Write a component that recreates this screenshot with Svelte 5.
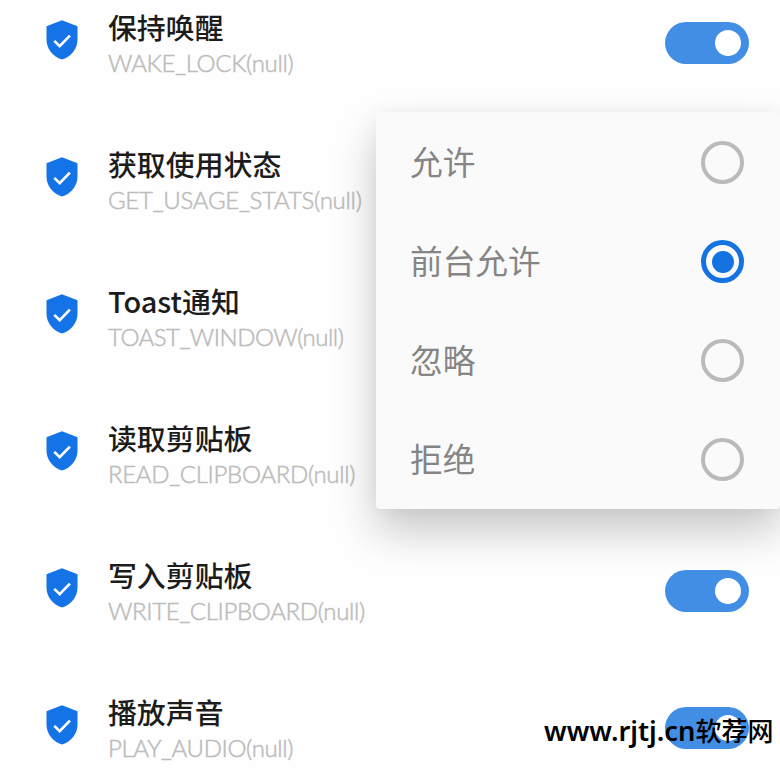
<script>
  const permissions = [
    { title: '保持唤醒', code: 'WAKE_LOCK(null)', on: true, ls: -0.3 },
    { title: '获取使用状态', code: 'GET_USAGE_STATS(null)', on: false, ls: -0.25 },
    { title: 'Toast通知', code: 'TOAST_WINDOW(null)', on: false, ls: -0.49 },
    { title: '读取剪贴板', code: 'READ_CLIPBOARD(null)', on: false, ls: -0.3 },
    { title: '写入剪贴板', code: 'WRITE_CLIPBOARD(null)', on: true, ls: -0.33 },
    { title: '播放声音', code: 'PLAY_AUDIO(null)', on: true, ls: -0.35 }
  ];
  const options = ['允许', '前台允许', '忽略', '拒绝'];
  let selected = $state(1);
</script>

<main>
  {#each permissions as p}
    <div class="row">
      <svg class="shield" width="32" height="40" viewBox="0 0 32 40">
        <path d="M16 .3 31.5 6.2V19.5C31.5 28.5 25.5 36.5 16 39.5 6.500 36.500 .5 28.500 .5 19.500V6.200Z" fill="#1473e6" />
        <path d="M8.300 20.900 13.700 26.100 23.900 15.600" fill="none" stroke="#fff" stroke-width="2.700" />
      </svg>
      <div class="text">
        <div class="title">{p.title}</div>
        <div class="code" style="letter-spacing:{p.ls}px">{p.code}</div>
      </div>
      {#if p.on}<div class="toggle"><i></i></div>{/if}
    </div>
  {/each}

  <div class="menu">
    {#each options as o, i}
      <div class="option">
        <span>{o}</span>
        <div class="radio" class:checked={selected === i}></div>
      </div>
    {/each}
  </div>
  <div class="mark">www.rjtj.cn<span>软荐网</span></div>
</main>

<style>
  main {
    position: relative;
    width: 780px;
    height: 778px;
    overflow: hidden;
    background: #fefefe;
    font-family: 'Noto Sans CJK SC', sans-serif;
  }
  .row {
    display: flex;
    align-items: flex-start;
    height: 137px;
    box-sizing: border-box;
    padding: 0 31px 0 46.400px;
  }
  .shield { margin-top: 19.600px; flex: none; }
  .text { margin-left: 29.600px; flex: 1; white-space: nowrap; }
  .title {
    margin-top: 6px;
    font-size: 28.900px;
    line-height: 40px;
    font-weight: 500;
    color: #1c1c1c;
  }
  .code {
    margin-top: 2px;
    font-family: Lato, sans-serif;
    font-weight: 300;
    font-size: 24px;
    line-height: 30px;
    color: #bcbcbc;
    -webkit-text-stroke: .5px #bcbcbc;
  }
  .toggle {
    display: flex;
    justify-content: flex-end;
    align-items: center;
    width: 84px;
    height: 42px;
    margin-top: 22.400px;
    padding-right: 8px;
    box-sizing: border-box;
    border-radius: 21px;
    background: #428ee5;
  }
  .toggle i { width: 26px; height: 26px; border-radius: 50%; background: #fff; }
  .menu {
    position: absolute;
    left: 376px;
    top: 112px;
    width: 404px;
    padding-top: 1px;
    border-radius: 4px;
    background: #fafafa;
    box-shadow: 0 22px 44px rgba(0, 0, 0, .22), 0 0 18px rgba(0, 0, 0, .04);
  }
  .option {
    display: flex;
    align-items: center;
    justify-content: space-between;
    height: 99px;
    padding: 0 36px 0 34px;
    font-size: 32.700px;
    color: #858585;
  }
  .option span { padding-bottom: 5px; }
  .radio {
    display: grid;
    place-items: center;
    width: 43px;
    height: 43px;
    box-sizing: border-box;
    border: 4px solid #bababa;
    border-radius: 50%;
  }
  .radio.checked { border-width: 5px; border-color: #1473e0; }
  .radio.checked::after {
    content: '';
    width: 22px;
    height: 22px;
    border-radius: 50%;
    background: #1473e0;
  }
  .mark {
    position: absolute;
    left: 544px;
    top: 711px;
    font: 600 27.300px/38px 'Noto Sans', 'Noto Sans CJK SC', sans-serif;
    color: #000;
    white-space: nowrap;
  }
  .mark span { font-family: 'Noto Sans CJK SC', sans-serif; font-size: 26px; font-weight: 500; }
</style>
